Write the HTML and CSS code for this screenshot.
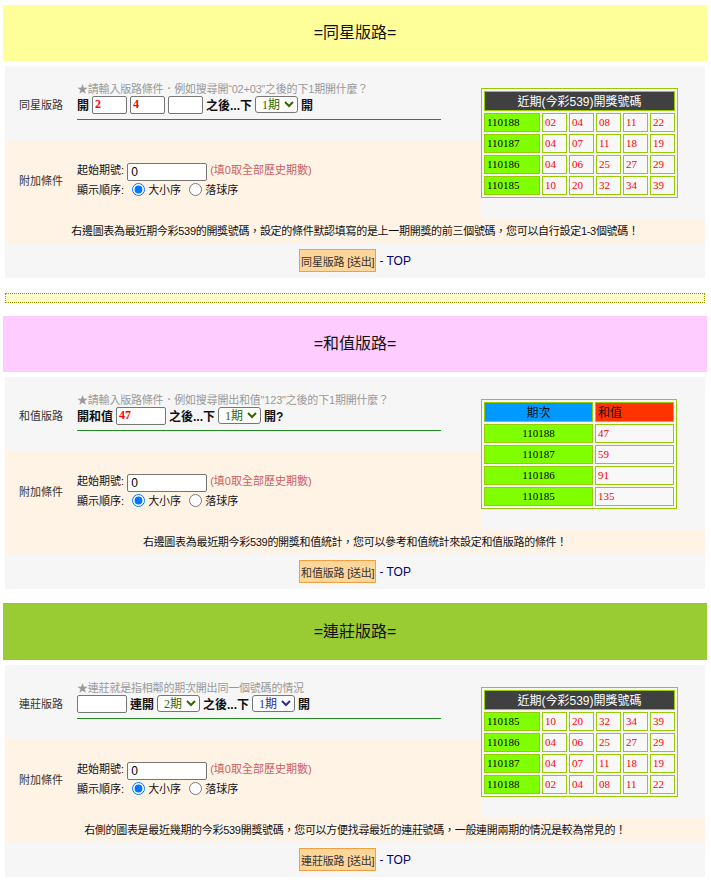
FILE: index.html
```html
<!DOCTYPE html>
<html lang="zh-Hant">
<head>
    <meta charset="UTF-8">
    <meta name="viewport" content="width=device-width, initial-scale=1.0">
    <title>今彩539 版路查詢</title>
    <link rel="stylesheet" href="styles.css">
</head>
<body>
<div class="page">

    <!-- 同星版路 -->
    <div class="title title-star">=同星版路=</div>
    <form class="panel">
        <div class="label row-a">同星版路</div>
        <div class="field row-a">
            <div class="hint">★請輸入版路條件．例如搜尋開“02+03”之後的下1期開什麼？</div>
            <div class="query">
                開 <input type="text" class="ball" value="2">
                <input type="text" class="ball" value="4">
                <input type="text" class="ball" value="">
                之後...下
                <select class="period green"><option>1期</option><option>2期</option><option>3期</option></select>
                開
            </div>
        </div>
        <div class="side">
            <table class="draw-table">
                <tr><th colspan="6" class="head-dark">近期(今彩539)開獎號碼</th></tr>
                <tr><td class="issue">110188</td><td>02</td><td>04</td><td>08</td><td>11</td><td>22</td></tr>
                <tr><td class="issue">110187</td><td>04</td><td>07</td><td>11</td><td>18</td><td>19</td></tr>
                <tr><td class="issue">110186</td><td>04</td><td>06</td><td>25</td><td>27</td><td>29</td></tr>
                <tr><td class="issue">110185</td><td>10</td><td>20</td><td>32</td><td>34</td><td>39</td></tr>
            </table>
        </div>
        <div class="label row-b">附加條件</div>
        <div class="field row-b">
            <div class="opt">起始期號: <input type="text" class="start" value="0"> <span class="note">(填0取全部歷史期數)</span></div>
            <div class="opt">顯示順序: <label><input type="radio" name="order1" checked>大小序</label> <label><input type="radio" name="order1">落球序</label></div>
        </div>
        <div class="desc">右邊圖表為最近期今彩539的開獎號碼，設定的條件默認填寫的是上一期開獎的前三個號碼，您可以自行設定1-3個號碼！</div>
        <div class="submit"><button type="button" class="send">同星版路 [送出]</button> - <a href="#">TOP</a></div>
    </form>

    <div class="divider"></div>

    <!-- 和值版路 -->
    <div class="title title-sum">=和值版路=</div>
    <form class="panel">
        <div class="label row-a">和值版路</div>
        <div class="field row-a">
            <div class="hint">★請輸入版路條件．例如搜尋開出和值"123"之後的下1期開什麼？</div>
            <div class="query">
                開和值 <input type="text" class="ball wide" value="47">
                之後...下
                <select class="period green"><option>1期</option><option>2期</option><option>3期</option></select>
                開?
            </div>
        </div>
        <div class="side">
            <table class="draw-table sum-table">
                <tr><th class="head-blue">期次</th><th class="head-red">和值</th></tr>
                <tr><td class="issue">110188</td><td>47</td></tr>
                <tr><td class="issue">110187</td><td>59</td></tr>
                <tr><td class="issue">110186</td><td>91</td></tr>
                <tr><td class="issue">110185</td><td>135</td></tr>
            </table>
        </div>
        <div class="label row-b">附加條件</div>
        <div class="field row-b">
            <div class="opt">起始期號: <input type="text" class="start" value="0"> <span class="note">(填0取全部歷史期數)</span></div>
            <div class="opt">顯示順序: <label><input type="radio" name="order2" checked>大小序</label> <label><input type="radio" name="order2">落球序</label></div>
        </div>
        <div class="desc">右邊圖表為最近期今彩539的開獎和值統計，您可以參考和值統計來設定和值版路的條件！</div>
        <div class="submit"><button type="button" class="send">和值版路 [送出]</button> - <a href="#">TOP</a></div>
    </form>

    <!-- 連莊版路 -->
    <div class="title title-run">=連莊版路=</div>
    <form class="panel">
        <div class="label row-a">連莊版路</div>
        <div class="field row-a">
            <div class="hint">★連莊就是指相鄰的期次開出同一個號碼的情況</div>
            <div class="query">
                <input type="text" class="ball wide" value="">
                連開
                <select class="period green"><option>2期</option><option>3期</option><option>4期</option></select>
                之後...下
                <select class="period blue"><option>1期</option><option>2期</option><option>3期</option></select>
                開
            </div>
        </div>
        <div class="side">
            <table class="draw-table">
                <tr><th colspan="6" class="head-dark">近期(今彩539)開獎號碼</th></tr>
                <tr><td class="issue">110185</td><td>10</td><td>20</td><td>32</td><td>34</td><td>39</td></tr>
                <tr><td class="issue">110186</td><td>04</td><td>06</td><td>25</td><td>27</td><td>29</td></tr>
                <tr><td class="issue">110187</td><td>04</td><td>07</td><td>11</td><td>18</td><td>19</td></tr>
                <tr><td class="issue">110188</td><td>02</td><td>04</td><td>08</td><td>11</td><td>22</td></tr>
            </table>
        </div>
        <div class="label row-b">附加條件</div>
        <div class="field row-b">
            <div class="opt">起始期號: <input type="text" class="start" value="0"> <span class="note">(填0取全部歷史期數)</span></div>
            <div class="opt">顯示順序: <label><input type="radio" name="order3" checked>大小序</label> <label><input type="radio" name="order3">落球序</label></div>
        </div>
        <div class="desc">右側的圖表是最近幾期的今彩539開獎號碼，您可以方便找尋最近的連莊號碼，一般連開兩期的情況是較為常見的！</div>
        <div class="submit"><button type="button" class="send">連莊版路 [送出]</button> - <a href="#">TOP</a></div>
    </form>

</div>
</body>
</html>
```

FILE: styles.css
```css
body {
    margin: 0;
    padding: 0;
    background: #fff;
    color: #222;
    font-family: "Liberation Sans", "Noto Sans CJK TC", sans-serif;
    font-size: 11px;
}
.page {
    width: 700px;
    margin: 0 0 0 5px;
    padding: 5px 0 8px;
}
.title {
    margin: 0 -2px 5px;
    height: 56px;
    line-height: 56px;
    text-align: center;
    font-size: 16px;
    color: #111;
}
.title-star {
    background: #ffff99;
}
.title-sum {
    background: #ffccff;
}
.title-run {
    background: #99cc33;
    margin-top: 14px;
    height: 57px;
    line-height: 57px;
}
.panel {
    display: grid;
    grid-template-columns: 72px 404px 1fr;
    grid-template-rows: 75px 78px 24px 35px;
    background: #f6f6f6;
    margin: 0;
}
.label {
    grid-column: 1;
    display: flex;
    align-items: center;
    justify-content: center;
    color: #333;
}
.field {
    grid-column: 2;
    display: flex;
    flex-direction: column;
    justify-content: center;
}
.row-a {
    grid-row: 1;
}
.row-b {
    grid-row: 2;
    background: #fff3e6;
}
.field.row-a {
    padding-bottom: 6px;
}
.hint {
    color: #999;
    line-height: 14px;
    white-space: nowrap;
    letter-spacing: -0.2px;
}
.query {
    display: flex;
    align-items: center;
    gap: 3px;
    width: 90%;
    height: 18px;
    padding-bottom: 5px;
    border-bottom: 1px solid #228b22;
    font-size: 12px;
    font-weight: bold;
    color: #111;
    white-space: nowrap;
}
.ball {
    box-sizing: border-box;
    width: 35px;
    height: 18px;
    padding: 0 2px;
    border: 1px solid #767676;
    border-radius: 2px;
    background: #fff;
    color: #f00;
    font-family: "Liberation Serif", serif;
    font-size: 12px;
    font-weight: bold;
}
.ball.wide {
    width: 50px;
}
.period {
    height: 17px;
    padding: 0 0 0 2px;
    font-family: "Liberation Serif", "Noto Sans CJK TC", serif;
    font-size: 12px;
    border: 1px solid #767676;
    border-radius: 3px;
    background: #fff;
}
.period.green {
    color: #336600;
}
.period.blue {
    color: #2a2aa0;
}
.opt {
    line-height: 18px;
    color: #111;
    white-space: nowrap;
}
.start {
    box-sizing: border-box;
    width: 80px;
    height: 18px;
    padding: 0 3px;
    border: 1px solid #767676;
    border-radius: 2px;
    font-family: "Liberation Sans", sans-serif;
    font-size: 12px;
    vertical-align: middle;
}
.opt input[type="radio"] {
    margin: 0 3px 0 5px;
    vertical-align: -2px;
}
.note {
    color: #cc5f5f;
}
.side {
    grid-column: 3;
    grid-row: 1 / 3;
    display: flex;
    align-items: center;
}
.draw-table {
    border: 1px solid #99cc00;
    border-spacing: 2px;
    font-family: "Liberation Serif", serif;
    font-size: 11px;
}
.draw-table th {
    height: 18px;
    padding: 0 2px;
    border: 1px solid #99cc00;
    font-family: "Liberation Sans", "Noto Sans CJK TC", sans-serif;
    font-weight: normal;
    font-size: 12px;
}
.draw-table td {
    width: 19px;
    height: 17px;
    padding: 0 2px;
    border: 1px solid #99cc00;
    background: #f8f8f8;
    color: #f00;
}
.draw-table td.issue {
    width: 50px;
    background: #80ff00;
    color: #000;
}
.head-dark {
    background: #404040;
    color: #fff;
}
.head-blue {
    background: #0099ff;
    color: #111;
}
.head-red {
    background: #ff3300;
    color: #111;
    text-align: left;
}
.sum-table td.issue {
    width: 103px;
    text-align: center;
}
.sum-table td {
    width: 73px;
}
.desc {
    grid-column: 1 / -1;
    grid-row: 3;
    background: #fff3e6;
    line-height: 24px;
    text-align: center;
    color: #111;
    letter-spacing: -0.3px;
}
.submit {
    grid-column: 1 / -1;
    grid-row: 4;
    display: flex;
    align-items: center;
    justify-content: center;
    gap: 3px;
    font-size: 12px;
    color: #00006e;
}
.submit a {
    color: #00006e;
    text-decoration: none;
}
.send {
    height: 23px;
    padding: 0 1px;
    border: 1px solid #f0a040;
    background: #ffd699;
    color: #333;
    font-family: "Liberation Sans", "Noto Sans CJK TC", sans-serif;
    font-size: 11px;
    letter-spacing: -0.2px;
}
.divider {
    height: 8px;
    margin: 15px 0 13px;
    border: 1px dotted #999900;
    background: #ffffcc;
}
```
